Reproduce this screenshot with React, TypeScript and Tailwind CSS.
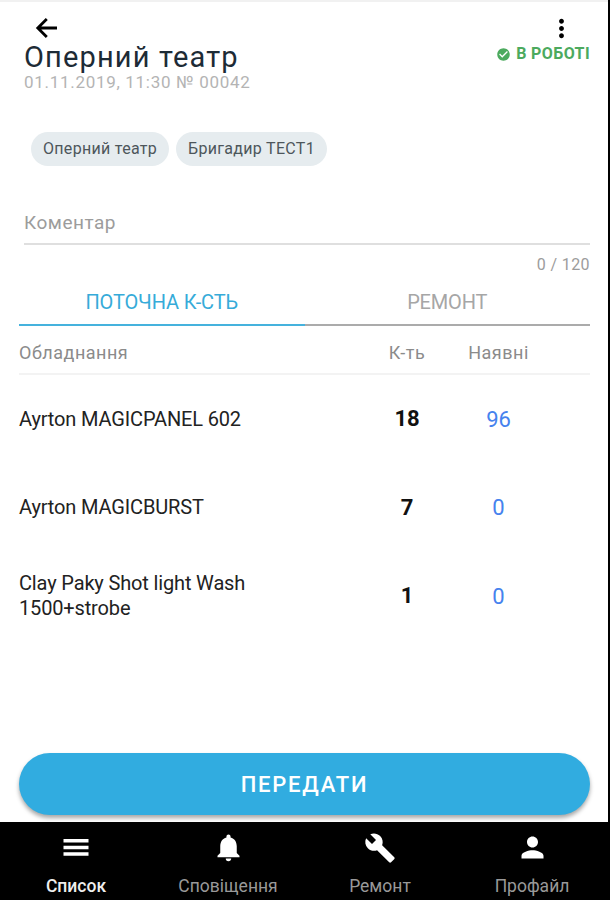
import React, { useState } from 'react';
import { MdBuild, MdCheckCircle, MdMoreVert, MdNotifications, MdPerson } from 'react-icons/md';

interface Equipment {
  id: number;
  name: string;
  quantity: number;
  available: number;
}

type TabType = 'current' | 'repair';

const equipment: Equipment[] = [
  { id: 1, name: 'Ayrton MAGICPANEL 602', quantity: 18, available: 96 },
  { id: 2, name: 'Ayrton MAGICBURST', quantity: 7, available: 0 },
  { id: 3, name: 'Clay Paky Shot light Wash 1500+strobe', quantity: 1, available: 0 },
];

const BackIcon = () => (
  <svg className="h-[30px] w-[30px]" viewBox="0 0 30 30" fill="none" stroke="currentColor" strokeWidth="2.8">
    <path d="M26 15H7M15.8 6 6.8 15l9 9" />
  </svg>
);

const ListIcon = () => (
  <svg className="h-[30px] w-[30px]" viewBox="0 0 30 30" fill="currentColor">
    <path d="M2.5 6h25v3.6h-25zM2.5 12.7h25v3.6h-25zM2.5 19.2h25v3.6h-25z" />
  </svg>
);

const navItems = [
  { label: 'Список', icon: <ListIcon /> },
  { label: 'Сповіщення', icon: <MdNotifications className="h-[33px] w-[33px]" /> },
  { label: 'Ремонт', icon: <MdBuild className="h-[32px] w-[32px]" /> },
  { label: 'Профайл', icon: <MdPerson className="h-[33px] w-[33px]" /> },
];

const Header = () => (
  <header className="h-[131px] pt-[12px]">
    <div className="flex h-[28px] items-center justify-between pr-[32px] pl-[31px]">
      <button>
        <BackIcon />
      </button>
      <button>
        <MdMoreVert className="h-[29px] w-[29px] text-black" />
      </button>
    </div>
    <div className="flex justify-between pr-[18px] pl-[24px]">
      <div>
        <h1 className="text-[29px] leading-[30px] tracking-[1.15px] text-[#1d2b36]">Оперний театр</h1>
        <p className="mt-[2px] text-[17px] leading-[17px] tracking-[0.7px] text-[#b4b4b4]">01.11.2019, 11:30 № 00042</p>
      </div>
      <div className="flex h-[24px] items-center gap-[5px] text-[#4caa5e]">
        <MdCheckCircle className="h-[15px] w-[15px]" />
        <span className="text-[16px] font-bold tracking-[0.4px]">В РОБОТІ</span>
      </div>
    </div>
  </header>
);

const Chip = ({ label }: { label: string }) => (
  <span className="flex h-[34px] items-center rounded-full bg-[#e6ecef] px-[12px] text-[16px] tracking-[0.3px] text-[#4d565b]">
    {label}
  </span>
);

export default function App() {
  const [tab, setTab] = useState<TabType>('current');
  const [activeNav, setActiveNav] = useState(0);

  const getTabClass = (value: TabType) =>
    tab === value ? 'border-[#45b2dd] text-[#36abd9]' : 'border-[#ababab] text-[#a6a6a6]';

  return (
    <div className="flex h-[900px] w-[610px] flex-col overflow-hidden bg-black pr-[2px] font-['Roboto','Liberation_Sans',sans-serif]">
      <main className="flex h-[822px] flex-col border-t-2 border-[#f1f1f1] bg-white">
        <Header />

        <div className="flex h-[32px] items-center gap-[7px] pl-[31px]">
          <Chip label="Оперний театр" />
          <Chip label="Бригадир ТЕСТ1" />
        </div>

        <div className="mt-[38px] mr-[18px] ml-[24px] flex h-[42px] items-center border-b-2 border-[#dfdfdf] text-[19px] tracking-[0.5px] text-[#9c9c9c]">
          Коментар
        </div>
        <div className="flex h-[38px] items-center justify-end pt-px pr-[18px] text-[16px] tracking-[0.4px] text-[#9c9c9c]">
          0 / 120
        </div>

        <div className="mr-[18px] ml-[19px] flex h-[43px] text-[20px] tracking-[-0.15px]">
          <button
            onClick={() => setTab('current')}
            className={`flex flex-1 items-center justify-center border-b-2 pb-[3px] ${getTabClass('current')}`}
          >
            ПОТОЧНА К-СТЬ
          </button>
          <button
            onClick={() => setTab('repair')}
            className={`flex flex-1 items-center justify-center border-b-2 pb-[3px] ${getTabClass('repair')}`}
          >
            РЕМОНТ
          </button>
        </div>

        <div className="mr-[18px] ml-[19px] grid h-[49px] grid-cols-[342px_92px_91px] items-center border-b-2 border-[#f3f3f3] pt-[6px] text-[18px] tracking-[0.5px] text-[#8b8b8b]">
          <span>Обладнання</span>
          <span className="text-center">К-ть</span>
          <span className="text-center">Наявні</span>
        </div>
        {equipment.map((item) => (
          <div key={item.id} className="mr-[18px] ml-[19px] grid h-[88.5px] grid-cols-[342px_92px_91px] items-center">
            <span className="max-w-[250px] text-[20px] leading-[25px] tracking-[-0.15px] text-[#222]">{item.name}</span>
            <span className="pb-px text-center text-[22px] font-bold text-[#111]">{item.quantity}</span>
            <span className="text-center text-[22px] text-[#4582ee]">{item.available}</span>
          </div>
        ))}

        <button className="mt-auto mr-[18px] mb-[7px] ml-[19px] h-[62px] shrink-0 rounded-full bg-[#31ace0] text-[22px] font-medium tracking-[1.8px] text-white shadow-[0_3px_4px_rgba(0,0,0,0.35)]">
          ПЕРЕДАТИ
        </button>
      </main>

      <nav className="grid h-[78px] grid-cols-4 bg-black text-white">
        {navItems.map((item, index) => (
          <button
            key={item.label}
            onClick={() => setActiveNav(index)}
            className="flex flex-col items-center pt-[9px]"
          >
            <span className="flex h-[33px] items-center">{item.icon}</span>
            <span
              className={`mt-[10px] text-[17.5px] leading-[24px] ${
                activeNav === index ? 'font-medium text-[#eeeeee]' : 'text-[#999999]'
              }`}
            >
              {item.label}
            </span>
          </button>
        ))}
      </nav>
    </div>
  );
}
